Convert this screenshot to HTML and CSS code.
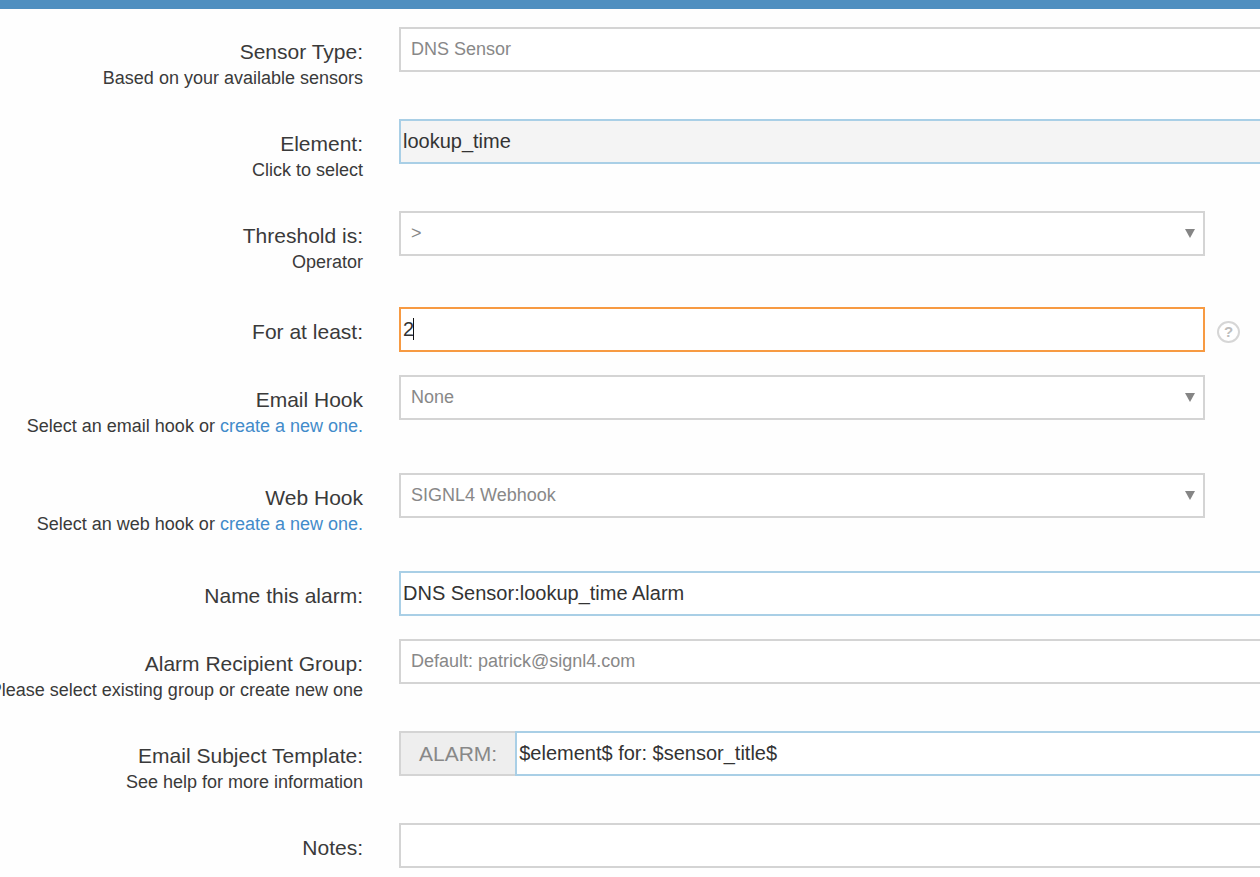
FILE: index.html
```
<!DOCTYPE html>
<html lang="en">
<head>
<meta charset="utf-8">
<title>Alarm settings</title>
<link rel="stylesheet" href="styles.css">
</head>
<body>
<header class="topbar"></header>
<form class="form">
  <div class="row">
    <div class="caption"><label class="label" for="type">Sensor Type:</label><span class="hint">Based on your available sensors</span></div>
    <div class="field wide"><select class="control select" id="type"><option>DNS Sensor</option></select></div>
  </div>
  <div class="row">
    <div class="caption"><label class="label" for="element">Element:</label><span class="hint">Click to select</span></div>
    <div class="field wide"><input class="control input readonly" id="element" type="text" value="lookup_time" readonly></div>
  </div>
  <div class="row spaced">
    <div class="caption"><label class="label" for="operator">Threshold is:</label><span class="hint">Operator</span></div>
    <div class="field">
      <select class="control select" id="operator"><option>&gt;</option></select>
      <svg class="arrow" viewBox="0 0 10 9"><path d="M0 0H10L5 9Z"/></svg>
    </div>
  </div>
  <div class="row single">
    <div class="caption"><label class="label" for="duration">For at least:</label></div>
    <div class="field">
      <input class="control input active" id="duration" type="text" value="2">
      <span class="caret"></span>
      <button class="help" type="button" aria-label="Help">?</button>
    </div>
  </div>
  <div class="row hook">
    <div class="caption"><label class="label" for="email">Email Hook</label><span class="hint">Select an email hook or <a href="#">create a new one.</a></span></div>
    <div class="field">
      <select class="control select" id="email"><option>None</option></select>
      <svg class="arrow" viewBox="0 0 10 9"><path d="M0 0H10L5 9Z"/></svg>
    </div>
  </div>
  <div class="row hook">
    <div class="caption"><label class="label" for="web">Web Hook</label><span class="hint">Select an web hook or <a href="#">create a new one.</a></span></div>
    <div class="field">
      <select class="control select" id="web"><option>SIGNL4 Webhook</option></select>
      <svg class="arrow" viewBox="0 0 10 9"><path d="M0 0H10L5 9Z"/></svg>
    </div>
  </div>
  <div class="row single">
    <div class="caption"><label class="label" for="name">Name this alarm:</label></div>
    <div class="field wide"><input class="control input" id="name" type="text" value="DNS Sensor:lookup_time Alarm"></div>
  </div>
  <div class="row">
    <div class="caption"><label class="label" for="group">Alarm Recipient Group:</label><span class="hint">Please select existing group or create new one</span></div>
    <div class="field wide"><select class="control select" id="group"><option>Default: patrick@signl4.com</option></select></div>
  </div>
  <div class="row">
    <div class="caption"><label class="label" for="subject">Email Subject Template:</label><span class="hint">See help for more information</span></div>
    <div class="field wide"><span class="addon">ALARM:</span><input class="control input" id="subject" type="text" value="$element$ for: $sensor_title$"></div>
  </div>
  <div class="row single">
    <div class="caption"><label class="label" for="notes">Notes:</label></div>
    <div class="field wide"><input class="control input plain" id="notes" type="text"></div>
  </div>
</form>
</body>
</html>
```
FILE: styles.css
```
* {
  box-sizing: border-box;
}

body {
  margin: 0;
  background: #fefefe;
  color: #3a3a3a;
  font-family: "Liberation Sans", Arial, sans-serif;
  overflow: hidden;
}

.topbar {
  height: 9px;
  background: #4f8fc0;
}

.form {
  padding-top: 18px;
}

.row {
  display: grid;
  grid-template-columns: 363px minmax(0, 1fr);
  column-gap: 36px;
  align-items: start;
  margin-bottom: 28px;
}

.row.spaced {
  margin-bottom: 32px;
}

.row.hook {
  margin-bottom: 34px;
}

.row.single {
  margin-bottom: 23px;
}

.caption {
  display: flex;
  flex-direction: column;
  align-items: flex-end;
  padding-top: 12px;
  white-space: nowrap;
  line-height: 26px;
}

.single .caption {
  padding-bottom: 7px;
}

.label {
  font-size: 21px;
}

.hint {
  font-size: 18px;
}

.hint a {
  color: #428bca;
  text-decoration: none;
}

.field {
  position: relative;
  display: flex;
  margin-right: 55px;
}

.field.wide {
  margin-right: -40px;
}

.control {
  flex: 1;
  min-width: 0;
  height: 45px;
  margin: 0;
  border: 2px solid #a9cfe6;
  border-radius: 0;
  outline: 0;
  background: #fff;
  font-family: inherit;
}

.input {
  padding: 0 2px;
  color: #333;
  font-size: 20px;
}

.input.readonly {
  background: #f4f4f4;
}

.input.active {
  border-color: #f79a42;
}

.input.plain {
  border-color: #d4d4d4;
}

.select {
  appearance: none;
  padding: 0 10px 2px;
  border-color: #d4d4d4;
  color: #888;
  font-size: 18px;
}

.arrow {
  position: absolute;
  top: 18px;
  right: 10px;
  width: 10px;
  height: 9px;
  fill: #858585;
  pointer-events: none;
}

.caret {
  position: absolute;
  top: 11px;
  left: 14px;
  width: 1px;
  height: 22px;
  background: #111;
}

.help {
  position: absolute;
  top: 14px;
  right: -35px;
  width: 23px;
  height: 22px;
  padding: 0;
  border: 2px solid #d6d6d6;
  border-radius: 50%;
  background: #fff;
  color: #bdbdbd;
  font: bold 15px/18px "Liberation Sans", Arial, sans-serif;
}

.addon {
  height: 45px;
  padding: 0 18px;
  border: 2px solid #d4d4d4;
  border-right: 0;
  background: #eee;
  color: #888;
  font-size: 21px;
  line-height: 41px;
}
```
